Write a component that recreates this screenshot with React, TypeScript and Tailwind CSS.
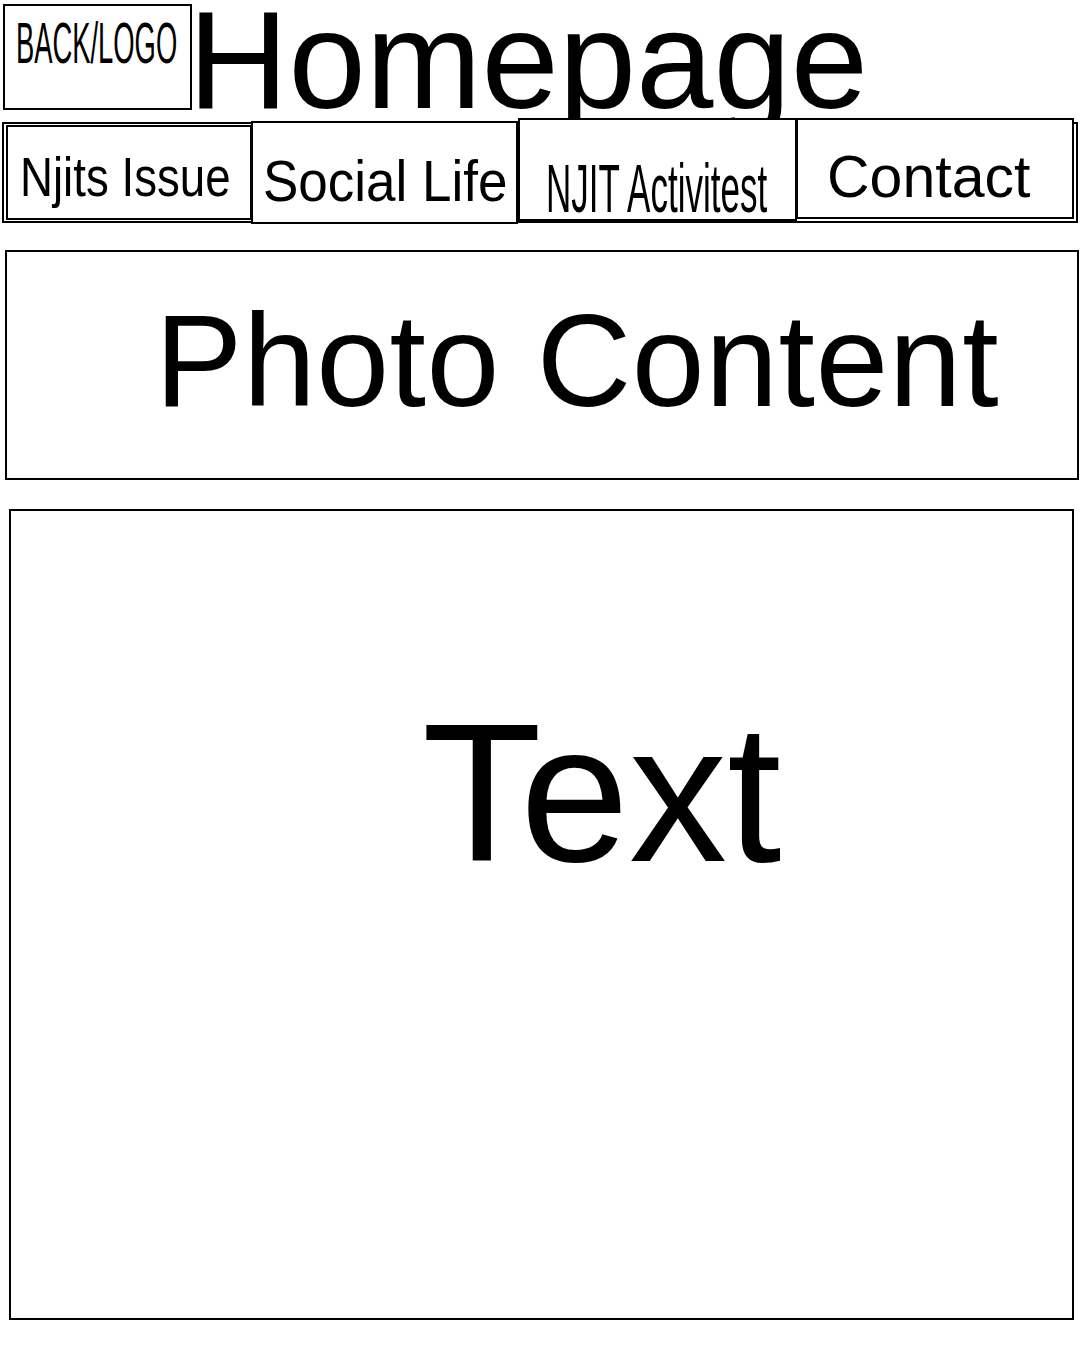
import React from "react";

export default function App() {
  return (
    <div className="w-[1080px] h-[1350px] bg-white text-black overflow-hidden font-['Liberation_Sans','Arial',sans-serif]">
      {/* Header */}
      <div className="flex items-start h-[119px]">
        <div className="mt-[4px] ml-[3px] w-[189px] h-[106px] border-2 border-black pt-[9px] pl-[11px] shrink-0">
          <div className="text-[57px] leading-none whitespace-nowrap origin-left scale-x-[0.48]">BACK/LOGO</div>
        </div>
        <div className="ml-[-4px] text-[139px] leading-[119px] whitespace-nowrap">Homepage</div>
      </div>

      {/* Nav */}
      <div className="relative mt-[3px] ml-[2px] w-[1076px] h-[101px] border-2 border-black bg-white flex items-start">
        <div className="ml-[2px] mt-[1px] w-[246px] h-[95px] border-2 border-black bg-white pt-[23px] pl-[12px] shrink-0">
          <div className="text-[55px] leading-none whitespace-nowrap origin-left scale-x-[0.83]">Njits Issue</div>
        </div>
        <div className="ml-[-1px] mt-[-3px] w-[267px] h-[103px] border-2 border-black bg-white pt-[30px] pl-[10px] shrink-0">
          <div className="text-[57px] leading-none whitespace-nowrap origin-left scale-x-[0.93]">Social Life</div>
        </div>
        <div className="mt-[-6px] w-[279px] h-[103px] border-2 border-black bg-white pt-[34px] pl-[26px] shrink-0">
          <div className="text-[68px] leading-none whitespace-nowrap origin-left scale-x-[0.515]">NJIT Activitest</div>
        </div>
        <div className="ml-[-1px] mt-[-6px] w-[278px] h-[101px] border-2 border-black bg-white pt-[28px] pl-[29px] shrink-0">
          <div className="text-[59px] leading-none whitespace-nowrap">Contact</div>
        </div>
      </div>

      {/* Photo Content */}
      <div className="mt-[27px] ml-[5px] w-[1074px] h-[230px] border-2 border-black pt-[43px] pl-[148px]">
        <div className="text-[131px] leading-none tracking-[0.5px] whitespace-nowrap">Photo Content</div>
      </div>

      {/* Text */}
      <div className="mt-[29px] ml-[9px] w-[1065px] h-[811px] border-2 border-black pt-[185px] pl-[411px]">
        <div className="text-[196px] leading-none whitespace-nowrap">Text</div>
      </div>
    </div>
  );
}
